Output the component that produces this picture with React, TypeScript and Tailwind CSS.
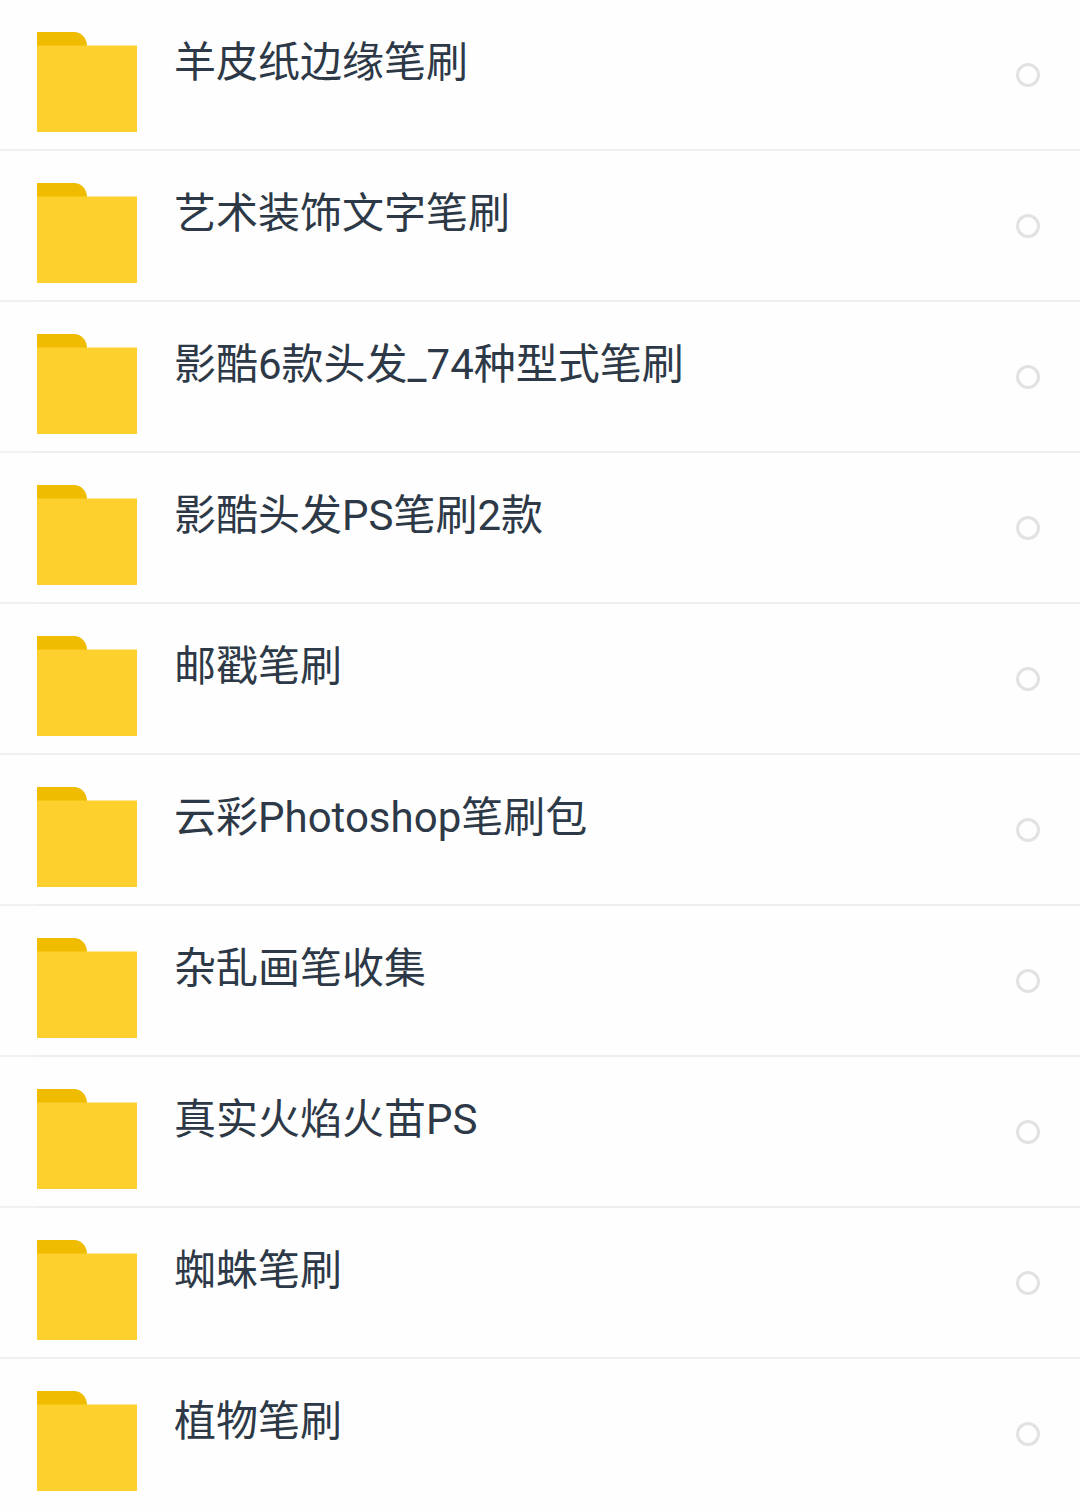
import { useState } from "react";

const folders = [
    "羊皮纸边缘笔刷",
    "艺术装饰文字笔刷",
    "影酷6款头发_74种型式笔刷",
    "影酷头发PS笔刷2款",
    "邮戳笔刷",
    "云彩Photoshop笔刷包",
    "杂乱画笔收集",
    "真实火焰火苗PS",
    "蜘蛛笔刷",
    "植物笔刷",
];

const FolderIcon = () => (
    <svg width="100" height="100" viewBox="0 0 100 100" className="mt-8 shrink-0 self-start" aria-hidden="true">
        <path d="M0 0H37C44 0 50 6 50 14H0Z" fill="#efbc00" />
        <path d="M0 13.5H100V100H0Z" fill="#fdd02e" />
    </svg>
);

// Divider is a touch lighter up to the icon's left edge
const Divider = () => (
    <div className="flex h-[2px]">
        <span className="w-9 bg-[#f1f1f1]" />
        <span className="flex-1 bg-[#eeeeee]" />
    </div>
);

type FolderRowProps = {
    name: string;
    checked: boolean;
    onToggle: () => void;
};

const FolderRow = ({ name, checked, onToggle }: FolderRowProps) => (
    <label className="flex h-[149px] items-center pr-10 pl-[37px]">
        <FolderIcon />
        <span className="mt-[33px] ml-[37px] flex-1 self-start text-[42px] leading-[60px]">{name}</span>
        <input
            type="checkbox"
            checked={checked}
            onChange={onToggle}
            className="size-6 shrink-0 appearance-none rounded-full border-3 border-[#e2e2e2] checked:bg-[#fdd02e]"
        />
    </label>
);

export default function App() {
    const [selected, setSelected] = useState<string[]>([]);

    const toggle = (name: string) => {
        setSelected((prev) => (prev.includes(name) ? prev.filter((n) => n !== name) : [...prev, name]));
    };

    return (
        <main className="min-h-screen bg-[#fefefe] font-[Roboto,'Noto_Sans_CJK_SC',sans-serif] text-[#2d3947]">
            <ul>
                {folders.map((name, index) => (
                    <li key={name}>
                        {index > 0 && <Divider />}
                        <FolderRow name={name} checked={selected.includes(name)} onToggle={() => toggle(name)} />
                    </li>
                ))}
            </ul>
        </main>
    );
}
